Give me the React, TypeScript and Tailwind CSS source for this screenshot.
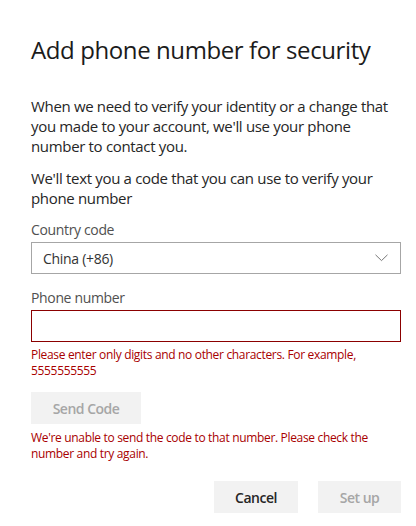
import React from "react";

export default function App() {
  return (
    <div
      className="w-[416px] h-[526px] bg-white overflow-hidden"
      style={{ fontFamily: '"Segoe UI", "Open Sans", "Noto Sans", sans-serif' }}
    >
      <div className="pl-[31px] pr-[15px] pt-[34px]">
        <h1 className="text-[24px] leading-[32px] tracking-[-0.4px] text-[#1b1b1b] font-normal">
          Add phone number for security
        </h1>
        <p className="mt-[30px] text-[15px] leading-[20px] tracking-[-0.33px] text-[#262626]">
          When we need to verify your identity or a change that you made to your account, we'll use your phone number to contact you.
        </p>
        <p className="mt-[12px] text-[15px] leading-[20px] tracking-[-0.33px] text-[#262626]">
          We'll text you a code that you can use to verify your phone number
        </p>
        <div className="mt-[12px] text-[14px] leading-[20px] tracking-[-0.35px] text-[#505050]">Country code</div>
        <div className="mt-[2px] h-[32px] w-[370px] border border-[#a6a6a6] flex items-center justify-between pl-[11px] pr-[12px]">
          <span className="text-[14px] tracking-[-0.3px] text-[#333]">China (+86)</span>
          <svg width="13" height="8" viewBox="0 0 13 8" fill="none">
            <path d="M0.5 0.8 L6.5 6.6 L12.5 0.8" stroke="#777" strokeWidth="1" />
          </svg>
        </div>
        <div className="mt-[14px] text-[14px] leading-[20px] tracking-[-0.35px] text-[#505050]">Phone number</div>
        <div className="mt-[2px] h-[32px] w-[370px] border border-[#8b0000]" />
        <div className="mt-[5px] text-[12px] leading-[16px] tracking-[-0.33px] text-[#a80000]">
          Please enter only digits and no other characters. For example, 5555555555
        </div>
        <button className="mt-[13px] h-[32px] w-[110px] bg-[#f2f2f2] text-[14px] font-semibold tracking-[-0.5px] text-[#a6a6a6]">
          Send Code
        </button>
        <div className="mt-[6px] w-[370px] text-[12px] leading-[16px] tracking-[-0.33px] text-[#a80000]">
          We're unable to send the code to that number. Please check the number and try again.
        </div>
        <div className="mt-[19px] w-[370px] flex justify-end gap-[20px]">
          <button className="h-[32px] w-[84px] bg-[#f2f2f2] text-[14px] font-semibold tracking-[-0.5px] text-[#262626]">
            Cancel
          </button>
          <button className="h-[32px] w-[83px] bg-[#f2f2f2] text-[14px] font-semibold tracking-[-0.5px] text-[#a6a6a6]">
            Set up
          </button>
        </div>
      </div>
    </div>
  );
}
